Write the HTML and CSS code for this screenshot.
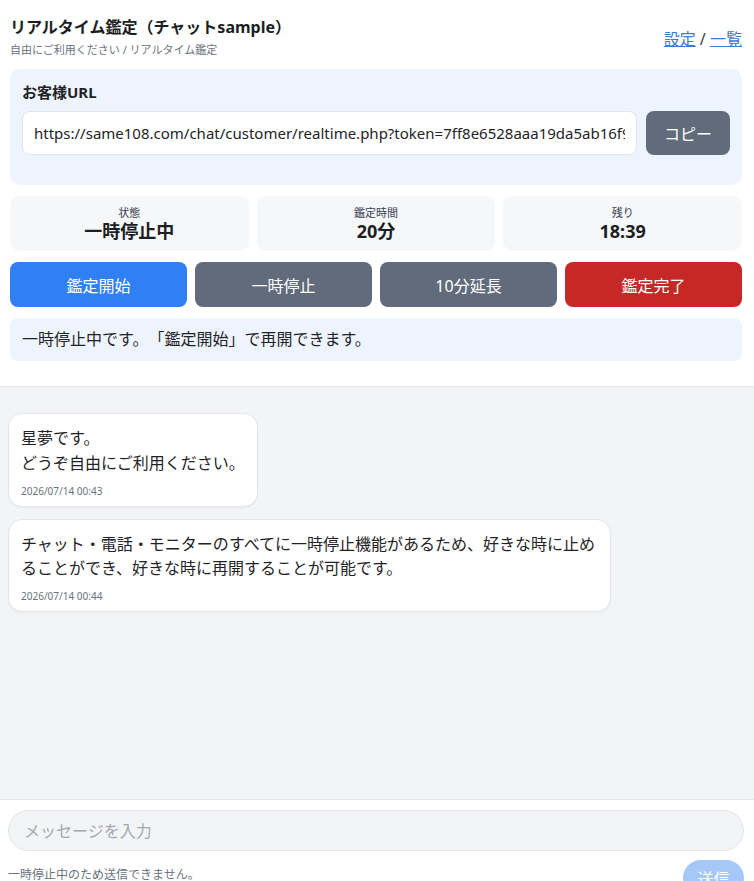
FILE: index.html
```html
<!DOCTYPE html>
<html lang="ja">
<head>
<meta charset="utf-8">
<title>リアルタイム鑑定</title>
<link rel="stylesheet" href="styles.css">
</head>
<body>
<div class="page">
  <header class="top">
    <div class="titlebar">
      <div class="titles">
        <h1 class="title">リアルタイム鑑定（チャットsample）</h1>
        <div class="subtitle">自由にご利用ください / リアルタイム鑑定</div>
      </div>
      <div class="links"><a href="#">設定</a> / <a href="#">一覧</a></div>
    </div>
    <section class="urlbox">
      <div class="urllabel">お客様URL</div>
      <div class="urlrow">
        <input class="urlinput" type="text" value="https://same108.com/chat/customer/realtime.php?token=7ff8e6528aaa19da5ab16f9c0b2e4d71" readonly>
        <button class="btn btn-gray copy">コピー</button>
      </div>
    </section>
    <div class="stats">
      <div class="stat"><div class="stat-label">状態</div><div class="stat-value">一時停止中</div></div>
      <div class="stat"><div class="stat-label">鑑定時間</div><div class="stat-value">20分</div></div>
      <div class="stat"><div class="stat-label">残り</div><div class="stat-value">18:39</div></div>
    </div>
    <div class="actions">
      <button class="btn btn-blue">鑑定開始</button>
      <button class="btn btn-gray">一時停止</button>
      <button class="btn btn-gray">10分延長</button>
      <button class="btn btn-red">鑑定完了</button>
    </div>
    <div class="notice">一時停止中です。「鑑定開始」で再開できます。</div>
  </header>
  <main class="chat">
    <div class="bubble">
      <div class="msg">星夢です。<br>どうぞ自由にご利用ください。</div>
      <div class="time">2026/07/14 00:43</div>
    </div>
    <div class="bubble">
      <div class="msg">チャット・電話・モニターのすべてに一時停止機能があるため、好きな時に止めることができ、好きな時に再開することが可能です。</div>
      <div class="time">2026/07/14 00:44</div>
    </div>
  </main>
  <footer class="composer">
    <input class="msginput" type="text" placeholder="メッセージを入力" disabled>
    <div class="composer-row">
      <div class="hint">一時停止中のため送信できません。</div>
      <button class="send" disabled>送信</button>
    </div>
  </footer>
</div>
</body>
</html>
```
FILE: styles.css
```css
* { box-sizing: border-box; }
html, body { margin: 0; padding: 0; }
body {
  font-family: "Noto Sans", "Noto Sans CJK JP", sans-serif;
  color: #1f2328;
  background: #fff;
  text-spacing-trim: space-all;
}
.page { display: flex; flex-direction: column; }
.top {
  background: #fff;
  padding: 16px 12px 25px 10px;
  display: flex;
  flex-direction: column;
  gap: 11px;
  border-bottom: 1px solid #e3e5e8;
}
.titlebar { display: flex; align-items: center; justify-content: space-between; }
.title { margin: 0; font-size: 16px; line-height: 22px; font-weight: 700; color: #1b1f24; }
.subtitle { margin-top: 4px; font-size: 11px; line-height: 16px; color: #6b7280; }
.links { font-size: 16px; color: #374151; padding-top: 2px; }
.links a { color: #3a7bd5; text-decoration: underline; }
.urlbox {
  background: #eef4fd;
  border-radius: 10px;
  padding: 12px 12px 30px 12px;
}
.urllabel { font-size: 15px; font-weight: 700; line-height: 22px; color: #1f2328; }
.urlrow { display: flex; gap: 9px; margin-top: 8px; }
.urlinput {
  flex: 1;
  min-width: 0;
  height: 44px;
  border: 1px solid #e2e5ea;
  border-radius: 8px;
  background: #fff;
  padding: 0 11px;
  font-family: "Noto Sans", "Noto Sans CJK JP", sans-serif;
  font-size: 15px;
  color: #1f2328;
  outline: none;
}
.btn {
  border: none;
  border-radius: 8px;
  color: #fff;
  font-family: "Noto Sans", "Noto Sans CJK JP", sans-serif;
  font-size: 16px;
  height: 45px;
}
.copy { width: 84px; height: 44px; flex: none; }
.btn-gray { background: #616b7b; }
.btn-blue { background: #3080f4; }
.btn-red { background: #c62828; }
.stats { display: grid; grid-template-columns: repeat(3, 1fr); gap: 8px; }
.stat {
  background: #f6f7f9;
  border-radius: 10px;
  height: 55px;
  display: flex;
  flex-direction: column;
  align-items: center;
  justify-content: center;
}
.stat-label { font-size: 11px; line-height: 14px; color: #374151; }
.stat-value { font-size: 18px; line-height: 22px; font-weight: 700; color: #1b1f24; }
.actions { display: grid; grid-template-columns: repeat(4, 1fr); gap: 8px; }
.notice {
  background: #eef4fd;
  border-radius: 8px;
  padding: 9px 12px 10px;
  font-size: 16px;
  line-height: 24px;
  color: #1f2328;
}
.chat {
  background: #f3f4f6;
  height: 412px;
  padding: 26px 8px;
  display: flex;
  flex-direction: column;
  align-items: flex-start;
  gap: 12px;
}
.bubble {
  background: #fff;
  border: 1px solid #e3e5e8;
  border-radius: 14px;
  padding: 12px 12px 8px 12px;
  max-width: 80vw;
  box-shadow: 0 1px 2px rgba(0,0,0,0.04);
}
.msg { font-size: 16px; line-height: 24.8px; color: #1f2328; }
.time { margin-top: 8px; font-size: 10px; line-height: 14px; color: #6b7280; }
.composer {
  background: #fff;
  border-top: 1px solid #e3e5e8;
  padding: 10px 10px 0 8px;
}
.msginput {
  width: 100%;
  height: 41px;
  border: 1px solid #e3e5e8;
  border-radius: 21px;
  background: #f3f4f6;
  padding: 0 15px;
  font-family: "Noto Sans", "Noto Sans CJK JP", sans-serif;
  font-size: 16px;
  outline: none;
}
.msginput::placeholder { color: #a3a8b0; }
.composer-row {
  display: flex;
  justify-content: space-between;
  align-items: flex-start;
  margin-top: 9px;
}
.hint { font-size: 12px; line-height: 16px; color: #6b7280; margin-top: 7px; }
.send {
  border: none;
  background: #a5c8f9;
  color: #fff;
  border-radius: 18px;
  width: 61px;
  height: 36px;
  font-family: "Noto Sans", "Noto Sans CJK JP", sans-serif;
  font-size: 16px;
}
```
